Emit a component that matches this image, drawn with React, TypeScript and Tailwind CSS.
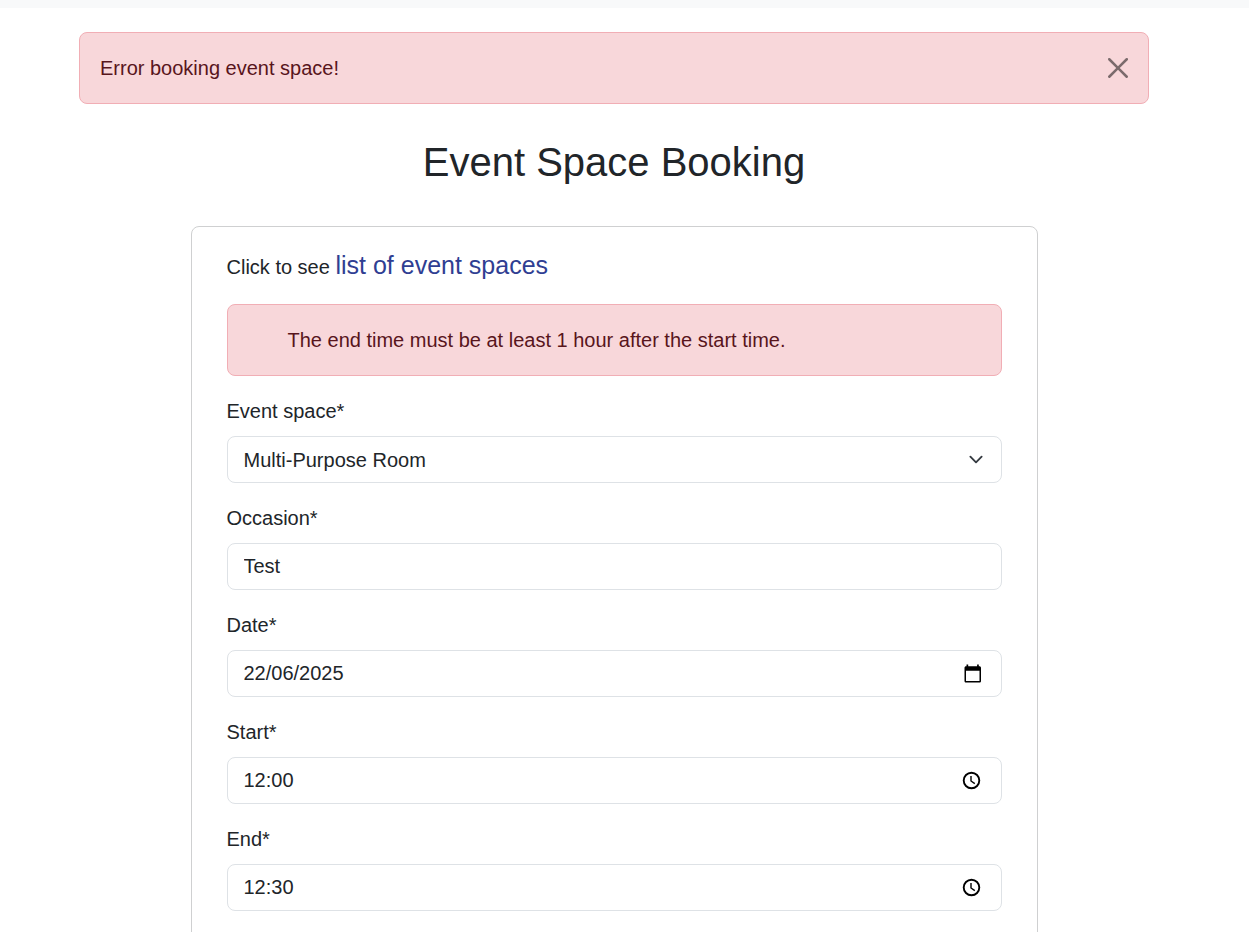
import { useState, type ReactNode } from "react";

const fieldBox =
  "flex h-[47px] w-full items-center rounded-lg border border-[#dee2e6] bg-white";
const fieldInput =
  "h-full min-w-0 flex-1 rounded-lg bg-transparent px-4 text-xl text-[#212529] outline-none";

function CalendarIcon() {
  return (
    <svg viewBox="-3.5 0 20 20" className="size-5 overflow-visible" fill="#000" aria-hidden="true">
      <path
        fillRule="evenodd"
        d="M2 .6h1.7v1.6h8.9V.6h1.7v1.6h.6c.9 0 1.6.7 1.6 1.6V17c0 .9-.7 1.6-1.6 1.6H1.6C.7 18.6 0 17.900 0 17V3.800c0-.9.7-1.600 1.600-1.600H2zM1.500 6.800V17H15V6.800z"
      />
    </svg>
  );
}

function ClockIcon() {
  return (
    <svg viewBox="0 0 20 20" className="size-5" fill="none" stroke="#000" aria-hidden="true">
      <circle cx="10.5" cy="9.5" r="7.8" strokeWidth="1.9" />
      <path d="M10 5v5l3.8 2.6" strokeWidth="1.4" />
    </svg>
  );
}

function Field({ id, label, children }: { id: string; label: string; children: ReactNode }) {
  return (
    <div className="mb-5">
      <label htmlFor={id} className="mb-2.5 block text-xl leading-[30px]">
        {label}
      </label>
      {children}
    </div>
  );
}

function PickerField(props: {
  id: string;
  label: string;
  initial: string;
  picker: string;
  icon: ReactNode;
}) {
  const [value, setValue] = useState(props.initial);
  return (
    <Field id={props.id} label={props.label}>
      <div className={fieldBox}>
        <input
          id={props.id}
          type="text"
          className={fieldInput}
          value={value}
          onChange={(e) => setValue(e.target.value)}
        />
        <button type="button" aria-label={props.picker} className="mr-5">
          {props.icon}
        </button>
      </div>
    </Field>
  );
}

export default function App() {
  const [showError, setShowError] = useState(true);
  return (
    <div className="min-h-screen bg-white font-['Liberation_Sans',Arial,sans-serif] text-xl leading-[30px] text-[#212529]">
      <header className="h-2 bg-[#f8f9fa]" />
      <main className="pt-6 pr-[21px]">
        <div className="mx-auto max-w-[1070px]">
          {showError && (
            <div
              role="alert"
              className="flex items-center justify-between rounded-lg border border-[#f1aeb5] bg-[#f8d7da] p-5 text-[#58151c]"
            >
              <p>Error booking event space!</p>
              <button
                type="button"
                aria-label="Close"
                className="opacity-50"
                onClick={() => setShowError(false)}
              >
                <svg viewBox="0 0 16 16" className="size-5" fill="#000" aria-hidden="true">
                  <path d="M.293.293a1 1 0 0 1 1.414 0L8 6.586 14.293.293a1 1 0 1 1 1.414 1.414L9.414 8l6.293 6.293a1 1 0 0 1-1.414 1.414L8 9.414l-6.293 6.293a1 1 0 0 1-1.414-1.414L6.586 8 .293 1.707a1 1 0 0 1 0-1.414z" />
                </svg>
              </button>
            </div>
          )}
          <h1 className="pt-[33px] pb-[39px] text-center text-[40px] leading-[50px]">
            Event Space Booking
          </h1>
          <form className="mx-auto max-w-[847px] rounded-lg border border-[#cfd0d1] px-[35px] py-5">
            <p className="mb-[18px] leading-[37px]">
              Click to see{" "}
              <a href="#spaces" className="text-[25px] text-[#2f3e92]">
                list of event spaces
              </a>
            </p>
            <div
              role="alert"
              className="mb-5 rounded-lg border border-[#f1aeb5] bg-[#f8d7da] py-5 pr-5 pl-[60px] text-[#58151c]"
            >
              The end time must be at least 1 hour after the start time.
            </div>
            <Field id="space" label="Event space*">
              <div className="relative">
                <select
                  id="space"
                  className="block h-[47px] w-full appearance-none rounded-lg border border-[#dee2e6] bg-white pr-12 pl-4 text-xl text-[#212529]"
                >
                  <option>Multi-Purpose Room</option>
                </select>
                <svg
                  viewBox="0 0 16 16"
                  className="pointer-events-none absolute inset-y-0 right-4 my-auto h-[15px] w-5"
                  fill="none"
                  stroke="#343a40"
                  strokeWidth="2"
                  strokeLinecap="round"
                  strokeLinejoin="round"
                  aria-hidden="true"
                >
                  <path d="m2 5 6 6 6-6" />
                </svg>
              </div>
            </Field>
            <Field id="occasion" label="Occasion*">
              <div className={fieldBox}>
                <input id="occasion" type="text" defaultValue="Test" className={fieldInput} />
              </div>
            </Field>
            <PickerField
              id="date"
              label="Date*"
              initial="22/06/2025"
              picker="Choose date"
              icon={<CalendarIcon />}
            />
            <PickerField
              id="start"
              label="Start*"
              initial="12:00"
              picker="Choose start time"
              icon={<ClockIcon />}
            />
            <PickerField
              id="end"
              label="End*"
              initial="12:30"
              picker="Choose end time"
              icon={<ClockIcon />}
            />
          </form>
        </div>
      </main>
    </div>
  );
}
